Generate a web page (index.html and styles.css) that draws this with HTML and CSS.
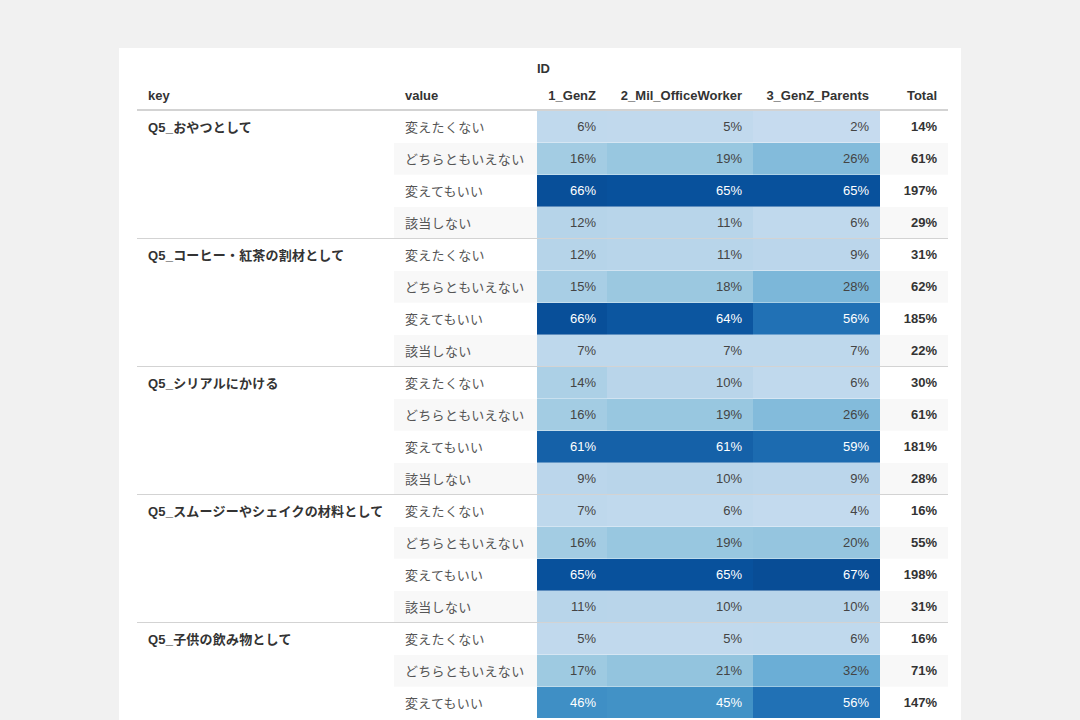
FILE: index.html
```html
<!DOCTYPE html>
<html lang="ja">
<head>
<meta charset="utf-8">
<title>Q5 table</title>
<link rel="stylesheet" href="styles.css">
</head>
<body>
<div class="card">
<table class="tbl">
<colgroup>
<col class="c-key"><col class="c-val"><col class="c-1"><col class="c-2"><col class="c-3"><col class="c-tot">
</colgroup>
<thead>
<tr class="spanner-row">
<th></th><th></th><th class="spanner" colspan="3">ID</th><th></th>
</tr>
<tr class="label-row">
<th class="lbl-left">key</th><th class="lbl-left">value</th><th class="num">1_GenZ</th><th class="num">2_Mil_OfficeWorker</th><th class="num">3_GenZ_Parents</th><th class="num">Total</th>
</tr>
</thead>
<tbody>
<tr class="first">
<td class="key" rowspan="4">Q5_おやつとして</td><td class="val">変えたくない</td>
<td class="heat" style="background:#c0d9ed">6%</td><td class="heat" style="background:#c1d9ed">5%</td><td class="heat" style="background:#c6dbef">2%</td><td class="tot">14%</td>
</tr>
<tr class="stripe">
<td class="val">どちらともいえない</td>
<td class="heat" style="background:#a3cce3">16%</td><td class="heat" style="background:#98c7e0">19%</td><td class="heat" style="background:#83bbdb">26%</td><td class="tot">61%</td>
</tr>
<tr>
<td class="val">変えてもいい</td>
<td class="heat dark" style="background:#084f99">66%</td><td class="heat dark" style="background:#08519c">65%</td><td class="heat dark" style="background:#08519c">65%</td><td class="tot">197%</td>
</tr>
<tr class="stripe">
<td class="val">該当しない</td>
<td class="heat" style="background:#b6d4e9">12%</td><td class="heat" style="background:#b8d5ea">11%</td><td class="heat" style="background:#c0d9ed">6%</td><td class="tot">29%</td>
</tr>

<tr class="first">
<td class="key" rowspan="4">Q5_コーヒー・紅茶の割材として</td><td class="val">変えたくない</td>
<td class="heat" style="background:#b6d4e9">12%</td><td class="heat" style="background:#b8d5ea">11%</td><td class="heat" style="background:#bbd6eb">9%</td><td class="tot">31%</td>
</tr>
<tr class="stripe">
<td class="val">どちらともいえない</td>
<td class="heat" style="background:#a8cee5">15%</td><td class="heat" style="background:#9bc8e0">18%</td><td class="heat" style="background:#7cb7d9">28%</td><td class="tot">62%</td>
</tr>
<tr>
<td class="val">変えてもいい</td>
<td class="heat dark" style="background:#084f99">66%</td><td class="heat dark" style="background:#0c56a0">64%</td><td class="heat dark" style="background:#2171b5">56%</td><td class="tot">185%</td>
</tr>
<tr class="stripe">
<td class="val">該当しない</td>
<td class="heat" style="background:#bed8ec">7%</td><td class="heat" style="background:#bed8ec">7%</td><td class="heat" style="background:#bed8ec">7%</td><td class="tot">22%</td>
</tr>

<tr class="first">
<td class="key" rowspan="4">Q5_シリアルにかける</td><td class="val">変えたくない</td>
<td class="heat" style="background:#acd0e6">14%</td><td class="heat" style="background:#b9d5ea">10%</td><td class="heat" style="background:#c0d9ed">6%</td><td class="tot">30%</td>
</tr>
<tr class="stripe">
<td class="val">どちらともいえない</td>
<td class="heat" style="background:#a3cce3">16%</td><td class="heat" style="background:#98c7e0">19%</td><td class="heat" style="background:#83bbdb">26%</td><td class="tot">61%</td>
</tr>
<tr>
<td class="val">変えてもいい</td>
<td class="heat dark" style="background:#1561a8">61%</td><td class="heat dark" style="background:#1561a8">61%</td><td class="heat dark" style="background:#1c6bb0">59%</td><td class="tot">181%</td>
</tr>
<tr class="stripe">
<td class="val">該当しない</td>
<td class="heat" style="background:#bbd6eb">9%</td><td class="heat" style="background:#b9d5ea">10%</td><td class="heat" style="background:#bbd6eb">9%</td><td class="tot">28%</td>
</tr>

<tr class="first">
<td class="key" rowspan="4">Q5_スムージーやシェイクの材料として</td><td class="val">変えたくない</td>
<td class="heat" style="background:#bed8ec">7%</td><td class="heat" style="background:#c0d9ed">6%</td><td class="heat" style="background:#c3daee">4%</td><td class="tot">16%</td>
</tr>
<tr class="stripe">
<td class="val">どちらともいえない</td>
<td class="heat" style="background:#a3cce3">16%</td><td class="heat" style="background:#98c7e0">19%</td><td class="heat" style="background:#95c5df">20%</td><td class="tot">55%</td>
</tr>
<tr>
<td class="val">変えてもいい</td>
<td class="heat dark" style="background:#08519c">65%</td><td class="heat dark" style="background:#08519c">65%</td><td class="heat dark" style="background:#084d96">67%</td><td class="tot">198%</td>
</tr>
<tr class="stripe">
<td class="val">該当しない</td>
<td class="heat" style="background:#b8d5ea">11%</td><td class="heat" style="background:#b9d5ea">10%</td><td class="heat" style="background:#b9d5ea">10%</td><td class="tot">31%</td>
</tr>

<tr class="first">
<td class="key" rowspan="3">Q5_子供の飲み物として</td><td class="val">変えたくない</td>
<td class="heat" style="background:#c1d9ed">5%</td><td class="heat" style="background:#c1d9ed">5%</td><td class="heat" style="background:#c0d9ed">6%</td><td class="tot">16%</td>
</tr>
<tr class="stripe">
<td class="val">どちらともいえない</td>
<td class="heat" style="background:#9ecae1">17%</td><td class="heat" style="background:#93c4de">21%</td><td class="heat" style="background:#6baed6">32%</td><td class="tot">71%</td>
</tr>
<tr>
<td class="val">変えてもいい</td>
<td class="heat dark" style="background:#3f8fc5">46%</td><td class="heat dark" style="background:#4292c6">45%</td><td class="heat dark" style="background:#2171b5">56%</td><td class="tot">147%</td>
</tr>
</tbody>
</table>
</div>
</body>
</html>
```

FILE: styles.css
```css
html, body {
  margin: 0;
  padding: 0;
}

body {
  background: #f1f1f1;
  font-family: "Liberation Sans", Arial, "Noto Sans CJK JP", sans-serif;
  color: #333333;
}

.card {
  background: #ffffff;
  margin: 48px 0 0 119px;
  width: 811px;
  padding: 7px 13px 2px 18px;
}

.tbl {
  width: 811px;
  table-layout: fixed;
  border-collapse: collapse;
  font-size: 13px;
}

.c-key { width: 257px; }
.c-val { width: 143px; }
.c-1 { width: 70px; }
.c-2 { width: 146px; }
.c-3 { width: 127px; }
.c-tot { width: 68px; }

.tbl th {
  font-weight: bold;
  color: #333333;
  padding: 0 11px;
  white-space: nowrap;
}

.spanner-row th {
  height: 26px;
  text-align: left;
}

.tbl th.spanner {
  padding-left: 0;
}

.label-row th {
  height: 28px;
  border-bottom: 2px solid #d3d3d3;
}

.lbl-left {
  text-align: left;
}

.num {
  text-align: right;
}

.tbl td {
  height: 31px;
  padding: 0 11px;
  border-top: 1px solid rgba(255, 255, 255, 0.35);
  white-space: nowrap;
  vertical-align: middle;
}

.tbl tr.first td {
  border-top: 1px solid #d3d3d3;
}

.tbl td.key {
  vertical-align: top;
  padding-top: 6px;
  font-weight: bold;
  color: #333333;
  background: #ffffff;
  letter-spacing: 0.2px;
}

.val {
  color: #555555;
  letter-spacing: 0.3px;
}

.heat {
  text-align: right;
  color: #444444;
}

.heat.dark {
  color: #ffffff;
}

.tot {
  text-align: right;
  font-weight: bold;
  color: #333333;
}

.stripe .val,
.stripe .tot {
  background: #f8f8f8;
}
```
